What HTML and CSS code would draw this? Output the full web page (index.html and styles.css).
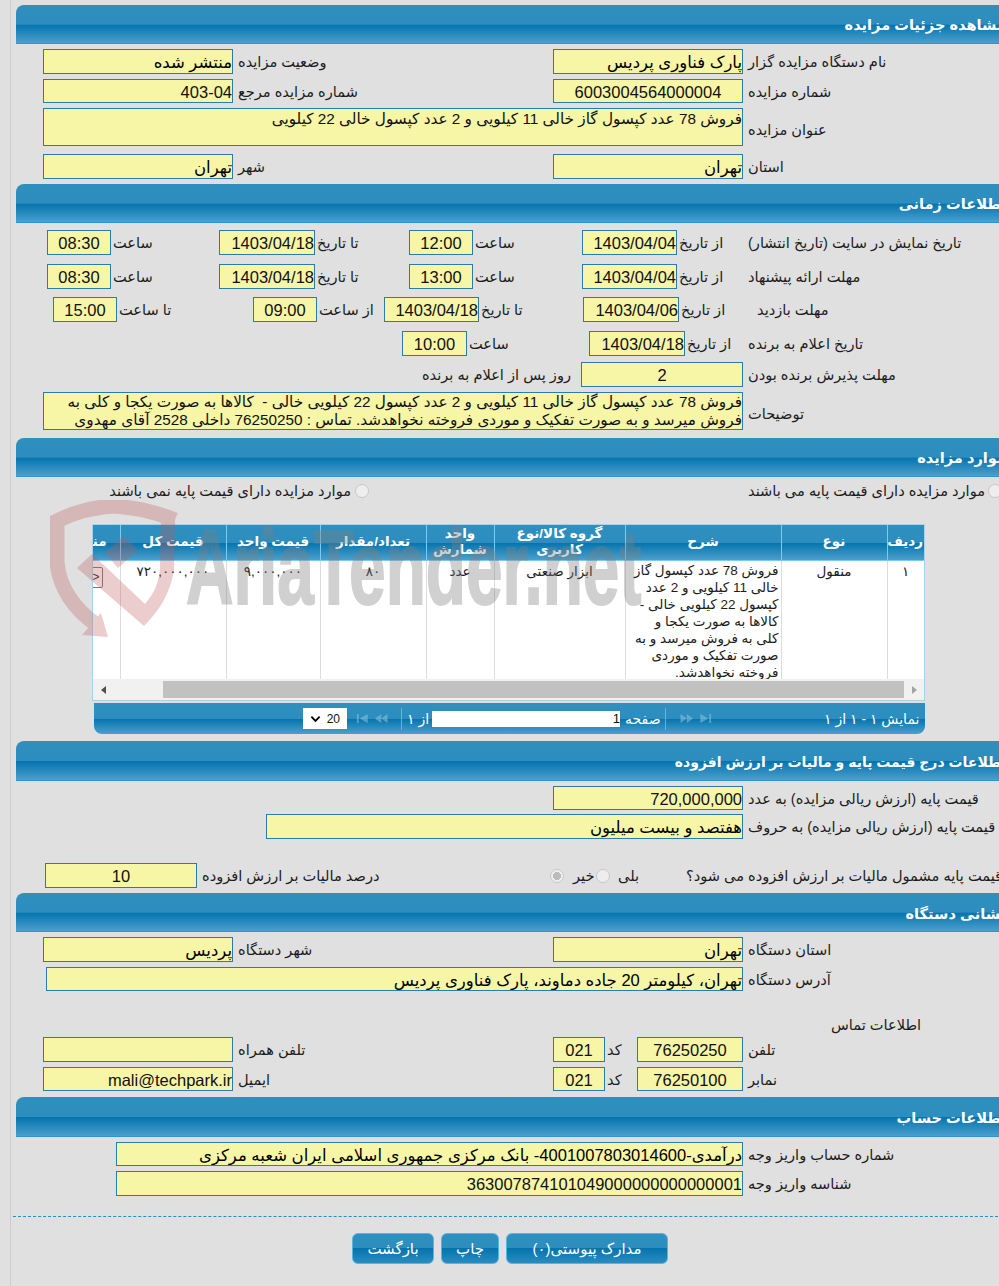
FILE: index.html
```html
<!DOCTYPE html>
<html lang="fa">
<head>
<meta charset="utf-8">
<title>مشاهده جزئیات مزایده</title>
<link rel="stylesheet" href="styles.css">
</head>
<body>
<main class="page">
  <section class="sec sec-first">
    <h2 class="bar">مشاهده جزئیات مزایده</h2>
    <div class="row r-two mt5 h25"><div class="fld str">منتشر شده</div><label>وضعیت مزایده</label><div class="fld str">پارک فناوری پردیس</div><label>نام دستگاه مزایده گزار</label></div>
    <div class="row r-two mt5 h24"><div class="fld">403-04</div><label>شماره مزایده مرجع</label><div class="fld mid">6003004564000004</div><label>شماره مزایده</label></div>
    <div class="row r-wide mt5 h38"><div class="fld top small">فروش 78 عدد کپسول گاز خالی 11 کیلویی و 2 عدد کپسول خالی 22 کیلویی</div><label>عنوان مزایده</label></div>
    <div class="row r-two mt8 h25"><div class="fld str">تهران</div><label>شهر</label><div class="fld str">تهران</div><label>استان</label></div>
  </section>

  <section class="sec">
    <h2 class="bar">اطلاعات زمانی</h2>
    <div class="row r-time1 mt7 h25"><div class="fld mid">08:30</div><label class="tight">ساعت</label><div class="fld">1403/04/18</div><label class="tight">تا تاریخ</label><div class="fld mid">12:00</div><label class="tight">ساعت</label><div class="fld">1403/04/04</div><label class="tight">از تاریخ</label><label>تاریخ نمایش در سایت (تاریخ انتشار)</label></div>
    <div class="row r-time1 mt9 h25"><div class="fld mid">08:30</div><label class="tight">ساعت</label><div class="fld">1403/04/18</div><label class="tight">تا تاریخ</label><div class="fld mid">13:00</div><label class="tight">ساعت</label><div class="fld">1403/04/04</div><label class="tight">از تاریخ</label><label>مهلت ارائه پیشنهاد</label></div>
    <div class="row r-time2 mt8 h25"><div class="fld mid">15:00</div><label class="tight">تا ساعت</label><div class="fld mid">09:00</div><label class="tight">از ساعت</label><div class="fld">1403/04/18</div><label class="tight">تا تاریخ</label><div class="fld">1403/04/06</div><label class="tight">از تاریخ</label><label class="indent">مهلت بازدید</label></div>
    <div class="row r-time3 mt9 h25"><div class="fld mid">10:00</div><label class="tight">ساعت</label><div class="fld">1403/04/18</div><label class="tight">از تاریخ</label><label>تاریخ اعلام به برنده</label></div>
    <div class="row r-accept mt6 h25"><label class="note">روز پس از اعلام به برنده</label><div class="fld mid">2</div><label>مهلت پذیرش برنده بودن</label></div>
    <div class="row r-wide mt5 h38"><div class="fld small multi">فروش 78 عدد کپسول گاز خالی 11 کیلویی و 2 عدد کپسول 22 کیلویی خالی -&nbsp; کالاها به صورت یکجا و کلی به<br>فروش میرسد و به صورت تفکیک و موردی فروخته نخواهدشد. تماس : 76250250 داخلی 2528 آقای مهدوی</div><label>توضیحات</label></div>
  </section>

  <section class="sec sec-3">
    <h2 class="bar">موارد مزایده</h2>
    <div class="radios">
      <span class="radio"></span><span class="radio-text">موارد مزایده دارای قیمت پایه نمی باشند</span>
      <span class="radio"></span><span class="radio-text">موارد مزایده دارای قیمت پایه می باشند</span>
    </div>
    <div class="grid-box">
      <div class="grid-clip">
        <table class="grid">
          <colgroup><col class="c1"><col class="c2"><col class="c3"><col class="c4"><col class="c5"><col class="c6"><col class="c7"><col class="c8"><col class="c9"></colgroup>
          <thead><tr><th>ردیف</th><th>نوع</th><th>شرح</th><th>گروه کالا/نوع کاربری</th><th>واحد شمارش</th><th>تعداد/مقدار</th><th>قیمت واحد</th><th>قیمت کل</th><th class="th-last">منتخب</th></tr></thead>
          <tbody><tr>
            <td class="ctr">۱</td><td class="ctr">منقول</td>
            <td class="desc">فروش 78 عدد کپسول گاز<br>خالی 11 کیلویی و 2 عدد<br>کپسول 22 کیلویی خالی -<br>کالاها به صورت یکجا و<br>کلی به فروش میرسد و به<br>صورت تفکیک و موردی<br>فروخته نخواهدشد.</td>
            <td class="ctr">ابزار صنعتی</td><td class="ctr">عدد</td><td class="ctr">۸۰</td><td class="ctr num">۹,۰۰۰,۰۰۰</td><td class="ctr num">۷۲۰,۰۰۰,۰۰۰</td>
            <td class="tool"><span class="mini">&lt;&gt;</span></td>
          </tr></tbody>
        </table>
      </div>
      <div class="hscroll"><span class="arrow-l"></span><span class="thumb"></span><span class="arrow-r"></span></div>
    </div>
    <div class="pager">
      <div class="sel"><svg class="chev" viewBox="0 0 12 8" aria-hidden="true"><path d="M1.5 1.5 6 6l4.5-4.5" fill="none" stroke="#000" stroke-width="2"/></svg><span>20</span></div>
      <svg class="nav nav-a" viewBox="0 0 38 10" aria-hidden="true"><path d="M0 0h2v10H0zM12 0v10L3 5zM34 0v10l-7-5zM27 0v10l-7-5z" fill="#8fc4de"/></svg>
      <span class="pg-sep sep-a"></span>
      <span class="pg-text of">از ۱</span>
      <div class="pg-input">1</div>
      <span class="pg-text word">صفحه</span>
      <span class="pg-sep sep-b"></span>
      <svg class="nav nav-b" viewBox="0 0 38 10" aria-hidden="true"><path d="M38 0h-2v10h2zM26 0v10l9-5zM4 0v10l7-5zM11 0v10l7-5z" fill="#8fc4de"/></svg>
      <span class="pg-text count">نمایش ۱ - ۱ از ۱</span>
    </div>
  </section>

  <section class="sec sec-4">
    <h2 class="bar bar40">اطلاعات درج قیمت پایه و مالیات بر ارزش افزوده</h2>
    <div class="row r-right mt5 h24"><div class="fld">720,000,000</div><label>قیمت پایه (ارزش ریالی مزایده) به عدد</label></div>
    <div class="row r-words mt4 h25"><div class="fld str">هفتصد و بیست میلیون</div><label>قیمت پایه (ارزش ریالی مزایده) به حروف</label></div>
    <div class="row r-tax mt24 h25"><div class="fld mid">10</div><label>درصد مالیات بر ارزش افزوده</label>
      <span class="radio checked"></span><span class="mini-label">خیر</span><span class="radio"></span><span class="mini-label">بلی</span><label class="question">قیمت پایه مشمول مالیات بر ارزش افزوده می شود؟</label></div>
  </section>

  <section class="sec sec-5">
    <h2 class="bar">نشانی دستگاه</h2>
    <div class="row r-two mt5 h25"><div class="fld str">پردیس</div><label>شهر دستگاه</label><div class="fld str">تهران</div><label>استان دستگاه</label></div>
    <div class="row r-addr mt5 h24"><div class="fld str">تهران، کیلومتر 20 جاده دماوند، پارک فناوری پردیس</div><label>آدرس دستگاه</label></div>
    <div class="contact">اطلاعات تماس</div>
    <div class="row r-phone mt3 h25"><div class="fld"></div><label>تلفن همراه</label><div class="fld mid">021</div><label class="tight">کد</label><div class="fld mid">76250250</div><label>تلفن</label></div>
    <div class="row r-phone mt5 h24"><div class="fld">mali@techpark.ir</div><label>ایمیل</label><div class="fld mid">021</div><label class="tight">کد</label><div class="fld mid">76250100</div><label>نمابر</label></div>
  </section>

  <section class="sec sec-6">
    <h2 class="bar bar40">اطلاعات حساب</h2>
    <div class="row r-acct mt5 h24"><div class="fld str">درآمدی-4001007803014600- بانک مرکزی جمهوری اسلامی ایران شعبه مرکزی</div><label>شماره حساب واریز وجه</label></div>
    <div class="row r-acct mt5 h25"><div class="fld">363007874101049000000000000001</div><label>شناسه واریز وجه</label></div>
  </section>

  <div class="actions">
    <button class="btn b-back" type="button">بازگشت</button>
    <button class="btn b-print" type="button">چاپ</button>
    <button class="btn b-docs" type="button">مدارک پیوستی(۰)</button>
  </div>
</main>

<div class="watermark" aria-hidden="true">
  <svg class="wm-logo" viewBox="0 0 140 145">
    <path d="M125 20C100 10 85 8 63 6 40 8 25 12 7 21V62C9 88 25 110 47 125" fill="none" stroke="#c25b5b" stroke-width="15"/>
    <polygon points="51,113 58,137 32,135" fill="#c25b5b"/>
    <path d="M125 20 124 70C120 95 108 112 94 126L27 68 42 54 95 104C105 92 109 82 110 68L111 20Z" fill="#c25b5b"/>
    <polygon points="73,36 88,50 68,68 55,53" fill="#c25b5b"/>
  </svg>
  <span class="wm-text">AriaTender.net</span>
</div>
</body>
</html>
```
FILE: styles.css
```css
* { box-sizing: border-box; }
html, body { margin: 0; padding: 0; }
body {
  position: relative;
  width: 999px;
  height: 1286px;
  overflow: hidden;
  background: #e0e0e0;
  color: #1c1c1c;
  font-family: "Liberation Sans", "DejaVu Sans", sans-serif;
  font-size: 14.6px;
}
.page {
  width: 1200px;
  height: 1286px;
  margin-left: 10px;
  padding: 5px 0 0 5px;
  border-left: 1px solid #cacaca;
}
.sec { width: 990px; margin-top: 5px; }
.sec-first { margin-top: 0; }
.sec-3 { margin-top: 8px; }
.sec-4 { margin-top: 7px; }
.sec-5 { margin-top: 5px; }
.sec-6 { margin-top: 6px; }
.bar {
  height: 39px;
  margin: 0;
  padding: 8px 0 0;
  border-top-left-radius: 8px;
  border-bottom: 1px solid #2d93da;
  background: linear-gradient(#2f8fbf 0, #2d8dbe 51%, #0474ae 52%, #4b9fcc 100%);
  color: #fff;
  direction: rtl;
  font: bold 14.6px/24px "Liberation Sans", "DejaVu Sans", sans-serif;
  white-space: nowrap;
}
.bar40, .sec-5 .bar { height: 40px; padding-top: 9px; }
.sec-5 .bar { height: 39px; }
.sec-4 .bar { font-size: 14px; }
.row { display: grid; align-items: center; }
.row label { white-space: nowrap; padding-left: 5px; direction: rtl; text-align: left; overflow: visible; }
.row label.tight { padding-left: 2px; }
.row label.indent { padding-left: 14px; }
.r-wide label { padding-top: 4px; }
.h24 { height: 24px; }
.h25 { height: 25px; }
.h38 { height: 38px; }
.mt3 { margin-top: 3px; }
.mt4 { margin-top: 4px; }
.mt5 { margin-top: 5px; }
.mt6 { margin-top: 6px; }
.mt7 { margin-top: 7px; }
.mt8 { margin-top: 8px; }
.mt9 { margin-top: 9px; }
.mt24 { margin-top: 24px; }
.fld {
  height: 100%;
  min-width: 0;
  padding: 0;
  border: 1px solid #2b7bad;
  background: #f7f5a6;
  color: #111;
  direction: rtl;
  font-size: 16.5px;
  line-height: 25px;
  text-align: right;
  white-space: nowrap;
  overflow: hidden;
}
.fld.mid { text-align: center; }
.fld.str { color: #000; font-weight: 500; }
.fld.small { font-size: 15.3px; line-height: 18px; }
.fld.top { line-height: 20px; }
.fld.multi { line-height: 18px; }
.r-two { grid-template-columns: 190px 320px 190px auto; padding-left: 27px; }
.r-wide { grid-template-columns: 700px auto; padding-left: 27px; }
.r-time1 { grid-template-columns: 64px 108px 96px 94px 64px 109px 95px 66px auto; padding-left: 31px; }
.r-time2 { grid-template-columns: 64px 136px 64px 67px 95px 104px 96px 64px auto; padding-left: 37px; }
.r-time3 { grid-template-columns: 65px 122px 96px 58px auto; padding-left: 386px; }
.r-accept { grid-template-columns: 538px 162px auto; padding-left: 27px; }
.row label.note { padding: 0 10px 0 0; text-align: right; }
.r-right { grid-template-columns: 190px auto; padding-left: 537px; }
.r-words { grid-template-columns: 477px auto; padding-left: 250px; }
.r-tax { grid-template-columns: 152px 353px 15px 31px 14px 76px auto; padding-left: 29px; }
.mini-label { direction: rtl; padding-left: 8px; white-space: nowrap; text-align: left; }
.row label.question { padding-left: 0; }
.r-addr { grid-template-columns: 697px auto; padding-left: 30px; }
.contact { height: 19px; margin-top: 24px; padding-left: 815px; line-height: 20px; direction: ltr; }
.r-phone { grid-template-columns: 190px 320px 52px 32px 106px auto; padding-left: 27px; }
.r-acct { grid-template-columns: 627px auto; padding-left: 100px; }

.radios {
  display: grid;
  grid-template-columns: 253px 14px 616px 3px 14px;
  align-items: center;
  height: 16px;
  margin-top: 5px;
  padding-left: 86px;
}
.radio {
  display: block;
  width: 14px;
  height: 14px;
  border: 1px solid #c8c8c8;
  border-radius: 50%;
  background: #eee;
}
.radio.checked { background: radial-gradient(circle, #bbb 0, #bbb 45%, #eee 50%); }
.radio-text { white-space: nowrap; direction: rtl; text-align: right; padding-right: 4px; }
.radios .radio:nth-child(1) { grid-column: 2; grid-row: 1; }
.radios .radio-text:nth-child(2) { grid-column: 1; grid-row: 1; }
.radios .radio:nth-child(3) { grid-column: 5; grid-row: 1; }
.radios .radio-text:nth-child(4) { grid-column: 3; grid-row: 1; padding-right: 0; }

.grid-box {
  width: 833px;
  margin: 26px 0 0 76px;
  border: 1px solid #a7d2ea;
  background: #fff;
}
.grid-clip { height: 154px; overflow: hidden; direction: rtl; }
.grid {
  table-layout: fixed;
  width: 912px;
  border-collapse: collapse;
  direction: rtl;
}
.c1 { width: 37px; } .c2 { width: 106px; } .c3 { width: 156px; } .c4 { width: 131px; }
.c5 { width: 68px; } .c6 { width: 106px; } .c7 { width: 94px; } .c8 { width: 106px; } .c9 { width: 108px; }
.grid th {
  height: 35px;
  padding: 0 1px;
  border-left: 1px solid #7fc8ee;
  border-bottom: 1px solid #7fc8ee;
  background: linear-gradient(#2f8fbf 0, #2d8dbe 50%, #0474ae 51%, #4b9fcc 100%);
  color: #fff;
  font-size: 13.5px;
  font-weight: bold;
  line-height: 16px;
  text-align: center;
}
.grid th.th-last { padding-right: 13px; text-align: right; white-space: nowrap; }
.grid td {
  height: 119px;
  padding: 2px 5px 0;
  border-left: 1px solid #dcdcdc;
  border-bottom: 1px solid #dcdcdc;
  font-size: 13.5px;
  line-height: 17px;
  vertical-align: top;
}
.grid td.ctr { text-align: center; }
.grid td.num { letter-spacing: .7px; }
.grid td.desc { padding: 1px 2px 0 0; white-space: nowrap; }
.grid td.tool { padding: 6px 17px 0 0; }
.mini {
  display: block;
  width: 28px;
  height: 21px;
  padding-right: 2px;
  border: 1px solid #777;
  border-radius: 2px;
  direction: ltr;
  font-size: 12px;
  line-height: 19px;
  text-align: right;
}
.hscroll {
  display: flex;
  align-items: center;
  height: 21px;
  background: #f1f1f1;
}
.thumb { width: 741px; height: 17px; margin: 0 0 0 57px; background: #c1c1c1; }
.arrow-l, .arrow-r { width: 0; height: 0; border-style: solid; border-color: transparent; }
.arrow-l { margin-left: 8px; border-width: 4px 5px 4px 0; border-right-color: #505050; }
.arrow-r { margin-left: 8px; border-width: 4px 0 4px 5px; border-left-color: #a3a3a3; }

.pager {
  display: flex;
  align-items: center;
  width: 831px;
  height: 31px;
  margin: 2px 0 0 78px;
  border-radius: 0 0 8px 8px;
  background: linear-gradient(#2f8fbf 0, #2d8dbe 50%, #0474ae 51%, #4b9fcc 100%);
  color: #fff;
  font-size: 14px;
}
.sel {
  display: flex;
  align-items: center;
  justify-content: space-between;
  width: 44px;
  height: 21px;
  margin-left: 209px;
  padding: 0 7px;
  background: #fff;
  color: #111;
  font-size: 12px;
}
.chev { width: 11px; height: 8px; }
.nav { width: 38px; height: 9px; opacity: .55; }
.nav-a { margin-left: 8px; }
.pg-sep { width: 1px; height: 22px; background: #6fb0d2; }
.sep-a { margin-left: 8px; }
.pg-text { white-space: nowrap; direction: rtl; text-align: left; }
.of { width: 23px; margin-left: 5px; }
.pg-input {
  width: 188px;
  height: 16px;
  margin-left: 2px;
  padding-right: 0;
  background: #fff;
  color: #111;
  font-size: 13px;
  line-height: 16px;
  text-align: right;
}
.word { width: 38px; margin-left: 5px; }
.sep-b { margin-left: 2px; }
.nav-b { margin-left: 9px; }
.count { margin-left: 111px; width: 96px; }

.actions {
  display: flex;
  gap: 7px;
  width: 990px;
  margin: 20px 0 0 -3px;
  padding: 16px 0 0 339px;
  border-top: 1px dashed #2a8cc4;
}
.btn {
  height: 31px;
  padding: 0;
  border: 1px solid #55b6e2;
  border-radius: 6px;
  background: linear-gradient(#2f8fbf 0, #2d8dbe 49%, #0474ae 50%, #2a8cc0 100%);
  color: #fff;
  font-family: "Liberation Sans", "DejaVu Sans", sans-serif;
  font-size: 15px;
}
.b-back { width: 82px; }
.b-print { width: 58px; }
.b-docs { width: 162px; }

.watermark {
  position: absolute;
  left: 0;
  top: 0;
  width: 999px;
  height: 1286px;
  pointer-events: none;
}
.wm-logo {
  position: absolute;
  left: 50px;
  top: 500px;
  width: 140px;
  height: 145px;
  opacity: .3;
}
.wm-text {
  position: absolute;
  left: 186px;
  top: 507px;
  color: #808080;
  opacity: .36;
  font: bold 106px/120px "Liberation Sans", sans-serif;
  -webkit-text-stroke: 2px #808080;
  white-space: nowrap;
  transform: scaleX(.62);
  transform-origin: 0 0;
}
```
